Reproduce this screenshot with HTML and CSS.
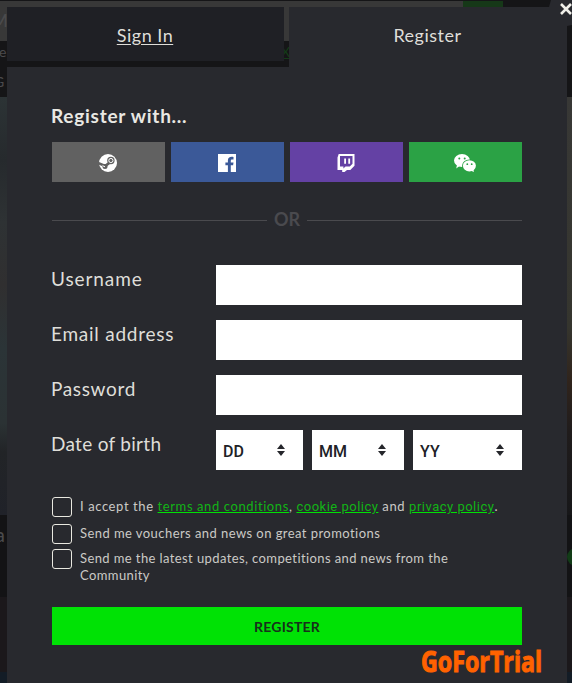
FILE: index.html
```html
<!DOCTYPE html>
<html lang="en">

<head>
    <meta charset="UTF-8">
    <meta name="viewport" content="width=device-width, initial-scale=1.0">
    <title>Register</title>
    <link rel="stylesheet" href="styles.css">
</head>

<body>
    <!-- dimmed page behind the modal -->
    <div class="page">
        <div class="page_search"><span>M</span><i></i></div>
        <div class="page_nav">
            <p><span>e</span><a class="page_link">X</a></p>
            <p>G</p>
        </div>
        <div class="page_hero"></div>
        <div class="page_strip"><span>a</span><i></i></div>
        <div class="page_foot"></div>
    </div>

    <div class="modal">
        <div class="tabs">
            <a class="tab"><span>Sign In</span></a>
            <a class="tab tab_active"><span>Register</span></a>
        </div>
        <form class="content">
            <h2><span>Register with...</span></h2>
            <div class="social">
                <a class="steam">
                    <svg width="18" height="18" viewBox="0 0 18 18">
                        <circle cx="9" cy="9" r="9" fill="#fff" />
                        <path d="M-.5 9.2 6.2 12 10.3 8.9" fill="none" stroke="#616161" stroke-width="2.6" />
                        <circle cx="6" cy="12.4" r="2.5" fill="#616161" />
                        <path d="M3.5 11.7 6 12.8" stroke="#fff" stroke-width="1" />
                        <circle cx="11.9" cy="6.5" r="3.7" fill="#616161" />
                        <circle cx="11.9" cy="6.5" r="2.1" fill="none" stroke="#fff" stroke-width="1" />
                    </svg>
                </a>
                <a class="facebook">
                    <svg width="18" height="18" viewBox="0 0 18 18">
                        <path d="M0 0h18v18h-5.2v-6.8h2.3l.4-2.8h-2.7V6.7c0-.9.4-1.3 1.4-1.3h1.3V2.9c-.5-.1-1.1-.1-1.8-.1-2.4 0-3.8 1.3-3.8 3.7v1.9H7.4v2.8h2.5V18H0z" fill="#fff" />
                    </svg>
                </a>
                <a class="twitch">
                    <svg width="18" height="18" viewBox="0 0 18 18">
                        <path d="M1.7 0h15.8v11.7l-4.2 4.2H10L7.5 18H5.2v-2.1H.5V3.5zM3 2v10.5h3.4v2l2.1-2h4.3l2.7-2.7V2z" fill="#fff" fill-rule="evenodd" />
                        <path d="M7.2 4.6H9v5.2H7.2zM11.3 4.6h1.8v5.2h-1.8z" fill="#fff" />
                    </svg>
                </a>
                <a class="wechat">
                    <svg width="22" height="18" viewBox="0 0 22 18">
                        <path d="M2.2 14.5 3 11h4z" fill="#fff" />
                        <ellipse cx="8" cy="6.5" rx="8" ry="6.5" fill="#fff" />
                        <ellipse cx="15.4" cy="11.8" rx="7.4" ry="6.4" fill="#2ba245" />
                        <ellipse cx="15.4" cy="11.8" rx="6.5" ry="5.6" fill="#fff" />
                        <path d="M16.5 16.5l3-1 .4 2.5z" fill="#fff" />
                        <g fill="#2ba245">
                            <circle cx="5.3" cy="4.5" r="1" />
                            <circle cx="10.7" cy="4.5" r="1" />
                            <circle cx="13.3" cy="10.2" r=".9" />
                            <circle cx="17.7" cy="10.2" r=".9" />
                        </g>
                    </svg>
                </a>
            </div>
            <div class="or"><span>OR</span></div>

            <div class="row">
                <label class="l_user" for="username"><span>Username</span></label>
                <input id="username" type="text">
            </div>
            <div class="row">
                <label class="l_email" for="email"><span>Email address</span></label>
                <input id="email" type="text">
            </div>
            <div class="row">
                <label class="l_pass" for="password"><span>Password</span></label>
                <input id="password" type="password">
            </div>
            <div class="row">
                <label class="l_birth"><span>Date of birth</span></label>
                <div class="birth">
                    <div class="select"><span>DD</span><svg width="8" height="12" viewBox="0 0 8 12"><path d="M0 5 4 0l4 5zM0 7h8l-4 5z" /></svg></div>
                    <div class="select"><span>MM</span><svg width="8" height="12" viewBox="0 0 8 12"><path d="M0 5 4 0l4 5zM0 7h8l-4 5z" /></svg></div>
                    <div class="select"><span>YY</span><svg width="8" height="12" viewBox="0 0 8 12"><path d="M0 5 4 0l4 5zM0 7h8l-4 5z" /></svg></div>
                </div>
            </div>

            <div class="checks">
                <div class="check terms">
                    <i class="box"></i>
                    <p>I accept the <a>terms and conditions</a>, <a class="din">cookie policy</a> and <a class="din">privacy policy</a>.</p>
                </div>
                <div class="check vouchers">
                    <i class="box"></i>
                    <p>Send me vouchers and news on great promotions</p>
                </div>
                <div class="check updates">
                    <i class="box"></i>
                    <p>Send me the latest updates, competitions and news from the<br>Community</p>
                </div>
            </div>
            <button class="submit" type="button">REGISTER</button>
        </form>
    </div>

    <div class="close">
        <svg width="12" height="12" viewBox="0 0 12 12"><path d="M1 1l10 10M11 1 1 11" stroke="#f0efe9" stroke-width="2.6" /></svg>
    </div>
    <div class="watermark">GoForTrial</div>
</body>

</html>
```

FILE: styles.css
```css
* {
    margin: 0;
    padding: 0;
    box-sizing: border-box;
}

body {
    width: 572px;
    height: 683px;
    overflow: hidden;
    position: relative;
    background: #151517;
    font-family: "Lato", "Open Sans", sans-serif;
    color: #dfded9;
}

/* page behind */
.page {
    height: 683px;
    color: #4b4b4d;
}

.page_search {
    height: 41px;
    border-top: 1px solid #151517;
    background: linear-gradient(90deg, #383838 503px, #151517 503px);
    display: flex;
    overflow: hidden;
}

.page_search span {
    width: 463px;
    font-size: 17px;
    line-height: 40px;
    text-indent: -8px;
}

.page_search i {
    width: 40px;
    background: #163818;
}

.page_nav {
    height: 56px;
    background: #151517;
    font-size: 14px;
    line-height: 22px;
}

.page_nav p {
    display: flex;
    justify-content: space-between;
    width: 290px;
    height: 30px;
    text-indent: -1px;
}

.page_nav p + p {
    text-indent: -6px;
}

.page_link {
    color: #143c18;
    text-decoration: underline;
}

.page_hero {
    height: 418px;
    background:
        linear-gradient(#383836, #35352e 55%, #30241c 68%, #201c1c 80%, #171719) right / 5px 100% no-repeat,
        linear-gradient(#2c3335, #262a2d 15%, #2e3234 30%, #302f30 45%, #2b3437 60%, #2b3234 78%, #222427 85%, #202229);
}

.page_strip {
    height: 82px;
    background: #131315;
    display: flex;
    justify-content: space-between;
    overflow: hidden;
}

.page_strip span {
    font-size: 20px;
    line-height: 38px;
    text-indent: -5px;
}

.page_strip i {
    width: 18px;
    height: 18px;
    margin: 33px -13px 0 0;
    border-radius: 50%;
    background: #123c17;
}

.page_foot {
    height: 86px;
    background: linear-gradient(#1b181b 75px, #131c26 75px);
}

/* modal */
.modal {
    position: absolute;
    top: 7px;
    left: 7px;
    width: 560px;
    height: 676px;
}

.tabs {
    display: flex;
    gap: 5px;
    height: 60px;
}

.tab {
    width: 277px;
    height: 54px;
    background: #1f2025;
    box-shadow: 0 6px #151517;
    font-size: 18px;
    line-height: 57px;
    text-align: center;
    text-decoration: underline;
    text-underline-offset: 2px;
}

.tab span {
    margin-right: 1px;
    letter-spacing: .5px;
}

.tab_active {
    width: 278px;
    height: 60px;
    background: #28292e;
    box-shadow: none;
    text-decoration: none;
}

.content {
    height: 616px;
    padding: 36px 45px 0;
    background: #28292e;
}

h2 {
    height: 39px;
    font-size: 19px;
    line-height: 25px;
    letter-spacing: .75px;
    text-indent: -1px;
    color: #e9e8e3;
}

.social {
    display: grid;
    grid-template-columns: repeat(4, 113px);
    gap: 6px;
    height: 40px;
}

.social a {
    display: flex;
    align-items: center;
    justify-content: center;
    padding: 2px 1px 0 0;
}

.steam {
    background: #616161;
}

.facebook {
    background: #3b5998;
}

.twitch {
    background: #6441a4;
}

.wechat {
    background: #2ba245;
}

.or {
    display: flex;
    align-items: center;
    gap: 7px;
    height: 24px;
    margin: 26px 0 33px;
    font-size: 18px;
    font-weight: bold;
    color: #4a4a4e;
}

.or span {
    padding-bottom: 2px;
}

.or::before,
.or::after {
    content: "";
    flex: 1;
    height: 1px;
    background: #4a4a4e;
}

.row {
    display: flex;
    height: 40px;
    margin-bottom: 15px;
}

.row label {
    width: 164px;
    font-size: 19px;
    line-height: 28px;
    text-indent: -1px;
}

.l_user {
    letter-spacing: .9px;
}

.l_email {
    letter-spacing: .75px;
}

.l_pass {
    letter-spacing: .65px;
}

.l_birth {
    letter-spacing: .3px;
}

.row input {
    width: 306px;
    height: 40px;
    border: 0;
    background: #fff;
}

.birth {
    display: grid;
    grid-template-columns: 87px 92px 109px;
    gap: 9px;
}

.select {
    display: flex;
    align-items: center;
    justify-content: space-between;
    padding: 0 18px 0 7px;
    background: #fff;
    color: #202126;
    font-family: "Roboto", sans-serif;
    font-size: 16px;
    font-weight: 500;
}

.select span {
    padding-top: 3px;
}

.select svg {
    fill: #25262b;
}

.checks {
    height: 110px;
    padding-top: 12px;
}

.check {
    display: flex;
    gap: 8px;
    font-size: 13px;
    line-height: 17px;
    color: #cbcac6;
    white-space: nowrap;
}

.check p {
    padding-top: 1px;
}

.box {
    width: 20px;
    height: 20px;
    border: 1px solid #e9e8e0;
    border-radius: 3px;
}

.terms {
    height: 27px;
    letter-spacing: .6px;
}

.vouchers {
    height: 25px;
    letter-spacing: .44px;
}

.updates {
    letter-spacing: .4px;
}

.check a {
    color: #12b416;
    text-decoration: underline;
    text-decoration-color: #00e205;
}

.check .din {
    font-family: "Roboto", sans-serif;
    letter-spacing: .5px;
}

.submit {
    display: block;
    width: 470px;
    height: 38px;
    margin-top: 12px;
    border: 0;
    background: #00e205;
    color: #17301b;
    font-family: "Lato", sans-serif;
    font-size: 14px;
    font-weight: bold;
    letter-spacing: .2px;
    line-height: 39px;
}

.close {
    position: absolute;
    top: 0;
    right: 0;
    width: 23px;
    height: 26px;
    padding: 3px 0 0 11px;
    background: #28292e;
    clip-path: polygon(2px 0, 100% 0, 100% 25px, 18px 26px, 0 26px, 0 7px);
}

.close svg {
    display: block;
}

.watermark {
    position: absolute;
    left: 421px;
    top: 644px;
    font-family: "Open Sans", sans-serif;
    font-size: 28px;
    font-weight: 700;
    line-height: 34px;
    color: #ff6200;
    -webkit-text-stroke: 1px #ff6200;
    stroke-linejoin: round;
    transform: scaleX(.83);
    transform-origin: left;
}
```
